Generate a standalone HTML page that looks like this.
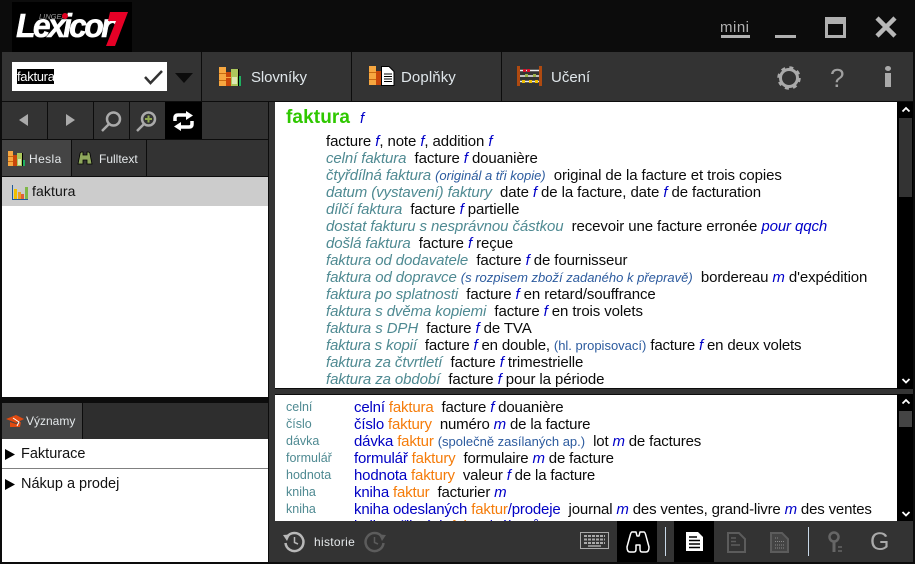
<!DOCTYPE html>
<html><head><meta charset="utf-8">
<style>
html,body{margin:0;padding:0}
body{width:915px;height:564px;position:relative;overflow:hidden;background:#0c0c0c;font-family:"Liberation Sans",sans-serif;font-size:14px;color:#000}
.a{position:absolute}
.l{position:absolute;white-space:nowrap;line-height:17px;height:17px}
.t{font-size:15px;letter-spacing:-.1px;color:#0a0a0a}
.u{letter-spacing:-.17px}
.p{font-style:italic;color:#4f8a92}
i{color:#0000c8}
.s{font-size:13px;letter-spacing:0;color:#2b5a9e}
.o{color:#f57c0a}
.b{color:#0000c4}
.w{color:#dfe6ea}
.n{font-size:12.500px;color:#4f8a92}
svg{position:absolute;overflow:visible}
</style></head><body>
<!-- Top bar -->
<div class="a" style="left:12px;top:2px;width:120px;height:50px;background:#000"></div>
<div class="a" style="left:16px;top:9px;font:italic bold 33px/34px 'Liberation Sans',sans-serif;color:#fff;letter-spacing:-2.800px;transform:scaleX(.97);transform-origin:left;-webkit-text-stroke:.5px #fff">Lexicon</div>
<div class="a" style="left:39px;top:12px;font:italic 7.500px/9px 'Liberation Sans',sans-serif;color:#999">LINGEA</div>
<div class="a" style="left:62px;top:13px;width:6px;height:6px;border-radius:50%;background:#e00020"></div>
<svg style="left:0;top:0" width="135" height="52"><path d="M110 12H128L115 46H106L116 21H108Z" fill="#e60026"/></svg>
<div class="a" style="left:720px;top:19px;font-size:15px;line-height:17px;color:#b0b0b0;letter-spacing:.5px">mini</div>
<div class="a" style="left:721px;top:35px;width:29px;height:3px;background:#b0b0b0"></div>
<div class="a" style="left:775px;top:35px;width:21px;height:3px;background:#b0b0b0"></div>
<div class="a" style="left:825px;top:17px;width:15px;height:11px;border:3px solid #b0b0b0;border-top-width:7px"></div>
<svg style="left:875px;top:16px" width="22" height="22"><path d="M2 2L20 20M20 2L2 20" stroke="#b8b8b8" stroke-width="4.500" fill="none"/></svg>

<!-- Toolbar -->
<div class="a" style="left:2px;top:52px;width:911px;height:49px;background:#333"></div>
<div class="a" style="left:201px;top:52px;width:1px;height:49px;background:#0c0c0c"></div>
<div class="a" style="left:351px;top:52px;width:1px;height:49px;background:#0c0c0c"></div>
<div class="a" style="left:501px;top:52px;width:1px;height:49px;background:#0c0c0c"></div>
<div class="a" style="left:12px;top:62px;width:155px;height:29px;background:#fff"></div>
<div class="a" style="left:17px;top:69px;height:15px;line-height:15px;background:#000;color:#fff;font-size:13px;letter-spacing:-.3px;width:37px;overflow:hidden">faktura</div>
<svg style="left:143px;top:69px" width="21" height="16"><path d="M2 8L7.500 14L19 2" stroke="#333" stroke-width="2.500" fill="none"/></svg>
<svg style="left:175px;top:73px" width="19" height="10"><path d="M0 0H18L9 10Z" fill="#0c0c0c"/></svg>

<!-- books icon slovniky -->
<svg style="left:219px;top:67px" width="23" height="20"><rect width="7" height="19" fill="#f7a740"/><rect y="6" width="7" height="1" fill="#c96a10"/><rect y="13" width="7" height="1" fill="#c96a10"/><rect x="7" y="5" width="5" height="14" fill="#c9470a"/><rect x="7" y="10" width="5" height="1" fill="#f7a740"/><rect x="12" y="2" width="7" height="17" fill="#acc85c"/><rect x="13" y="10" width="5" height="7" fill="#dce8b4"/><rect x="19" y="2" width="1" height="17" fill="#000"/><rect x="20" y="9" width="2" height="10" fill="#1fb060"/></svg>
<div class="l w" style="left:251px;top:69px;font-size:15px;letter-spacing:-.1px">Slovníky</div>
<svg style="left:369px;top:66px" width="26" height="21"><rect width="7" height="19" y="0" fill="#f7a740"/><rect y="6" width="7" height="1" fill="#c96a10"/><rect y="13" width="7" height="1" fill="#c96a10"/><rect x="7" y="5" width="6" height="14" fill="#c9470a"/><path d="M12.500 .5H20L25 5.500V19.500H12.500Z" fill="#fff" stroke="#000"/><path d="M15 8H23M15 10.500H23M15 13H23M15 15.500H23" stroke="#000" stroke-width="1"/></svg>
<div class="l w" style="left:401px;top:69px;font-size:15px;letter-spacing:.1px">Doplňky</div>
<svg style="left:517px;top:66px" width="26" height="20"><rect width="3" height="20" fill="#b04a10"/><rect x="22" width="3" height="20" fill="#b04a10"/><path d="M3 4.500H22M3 10H22M3 15.500H22" stroke="#eee" stroke-width="1.500"/><rect x="6" y="3" width="3" height="3" fill="#d8102a"/><rect x="10" y="3" width="3" height="3" fill="#d8102a"/><rect x="8" y="8" width="3" height="3" fill="#9ab048"/><rect x="16" y="8" width="3" height="3" fill="#9ab048"/><rect x="5" y="14" width="3" height="3" fill="#f0c000"/><rect x="12" y="14" width="3" height="3" fill="#f0c000"/><rect x="18" y="14" width="3" height="3" fill="#f0c000"/></svg>
<div class="l w" style="left:551px;top:69px;font-size:15px">Učení</div>
<svg style="left:776px;top:65px" width="26" height="26"><circle cx="13" cy="13" r="8.500" fill="none" stroke="#aaa" stroke-width="3"/><circle cx="13" cy="13" r="10.500" fill="none" stroke="#aaa" stroke-width="2.500" stroke-dasharray="4 4.250"/></svg>
<div class="a" style="left:830px;top:63px;font-size:26px;line-height:30px;color:#a0a0a0">?</div>
<div class="a" style="left:885px;top:66px;width:6px;height:5px;border-radius:50%;background:#aaa"></div>
<div class="a" style="left:885px;top:73px;width:6px;height:14px;background:#aaa"></div>

<!-- Left column -->
<div class="a" style="left:0;top:101px;width:2px;height:463px;background:#0c0c0c"></div>
<div class="a" style="left:2px;top:102px;width:266px;height:37px;background:#333"></div>
<div class="a" style="left:47px;top:102px;width:1px;height:37px;background:#0c0c0c"></div>
<div class="a" style="left:93px;top:102px;width:1px;height:37px;background:#0c0c0c"></div>
<div class="a" style="left:129px;top:102px;width:1px;height:37px;background:#0c0c0c"></div>
<div class="a" style="left:165px;top:102px;width:37px;height:37px;background:#000"></div>
<svg style="left:19px;top:114px" width="10" height="13"><path d="M9 0V12L0 6Z" fill="#aaa"/></svg>
<svg style="left:66px;top:114px" width="10" height="13"><path d="M0 0V12L9 6Z" fill="#aaa"/></svg>
<svg style="left:101px;top:110px" width="22" height="22"><circle cx="12.500" cy="9" r="6.500" fill="none" stroke="#aaa" stroke-width="2.500"/><path d="M8 14L1 21" stroke="#aaa" stroke-width="2.500"/></svg>
<svg style="left:136px;top:110px" width="22" height="22"><circle cx="12.500" cy="9" r="6.500" fill="none" stroke="#aaa" stroke-width="2.500"/><path d="M8 14L1 21" stroke="#aaa" stroke-width="2.500"/><path d="M9 9H16M12.500 5.500V12.500" stroke="#8fa850" stroke-width="2"/></svg>
<svg style="left:173px;top:111px" width="21" height="20"><path d="M2 10V7Q2 4 5 4H15M19 10V13Q19 16 16 16H6" stroke="#fff" stroke-width="3.500" fill="none"/><path d="M13 0L20 4.500L13 9ZM8 11L1 15.500L8 20Z" fill="#fff"/></svg>

<div class="a" style="left:2px;top:140px;width:266px;height:36px;background:#333"></div>
<div class="a" style="left:2px;top:140px;width:69px;height:36px;background:#444"></div>
<div class="a" style="left:71px;top:140px;width:1px;height:36px;background:#0c0c0c"></div>
<div class="a" style="left:146px;top:140px;width:1px;height:36px;background:#0c0c0c"></div>
<svg style="left:8px;top:151px" width="18" height="16"><rect width="5" height="15" fill="#f7a740"/><rect y="5" width="5" height="1" fill="#c96a10"/><rect y="10" width="5" height="1" fill="#c96a10"/><rect x="5" y="4" width="4" height="11" fill="#c9470a"/><rect x="9" y="2" width="5" height="13" fill="#acc85c"/><rect x="10" y="8" width="3" height="6" fill="#dce8b4"/><rect x="14" y="2" width="1" height="13" fill="#000"/><rect x="15" y="9" width="2" height="6" fill="#1fb060"/></svg>
<div class="l" style="left:29px;top:151px;font-size:12px;letter-spacing:.4px;color:#e4e8ea">Hesla</div>
<svg style="left:78px;top:151px" width="15" height="15"><path d="M2 3Q2 1 4 1H5V4H9V1H10Q12 1 12 3L14 13H9V9H5V13H0Z" fill="#8fa85c" stroke="#000" stroke-width=".8"/></svg>
<div class="l" style="left:99px;top:151px;font-size:12px;color:#e4e8ea">Fulltext</div>

<div class="a" style="left:2px;top:177px;width:266px;height:220px;background:#fff"></div>
<div class="a" style="left:2px;top:177px;width:266px;height:29px;background:#ccc"></div>
<svg style="left:12px;top:184px" width="17" height="17"><rect x="2" y="5" width="3" height="10" fill="#f0c000"/><rect x="6" y="8" width="3" height="7" fill="#f0a020"/><rect x="9" y="10" width="3" height="5" fill="#e0603a"/><rect x="13" y="3" width="3" height="12" fill="#7fb848"/><path d="M.5 1V15.500H16" fill="none" stroke="#1f5a9a"/></svg>
<div class="l" style="left:32px;top:183px;font-size:14px;letter-spacing:.1px;color:#111">faktura</div>

<div class="a" style="left:2px;top:403px;width:266px;height:36px;background:#2e2e2e"></div>
<div class="a" style="left:2px;top:403px;width:80px;height:36px;background:#444"></div>
<div class="a" style="left:82px;top:403px;width:1px;height:36px;background:#0c0c0c"></div>
<svg style="left:6px;top:415px" width="19" height="14"><path d="M0 4L10 0L18 4L10 8Z" fill="#e04a10"/><path d="M4 7V12H14L15 7L10 9Z" fill="#e04a10"/><path d="M7 3L13 7L11 11" stroke="#fff" stroke-width="1" fill="none"/></svg>
<div class="l" style="left:26px;top:413px;font-size:12px;color:#e4e8ea">Významy</div>
<div class="a" style="left:2px;top:439px;width:266px;height:123px;background:#fff"></div>
<div class="a" style="left:2px;top:468px;width:266px;height:1px;background:#808080"></div>
<svg style="left:5px;top:449px" width="10" height="12"><path d="M0 0V11L10 5.500Z" fill="#000"/></svg>
<div class="l" style="left:21px;top:446px;font-size:14.500px;color:#111">Fakturace</div>
<svg style="left:5px;top:479px" width="10" height="12"><path d="M0 0V11L10 5.500Z" fill="#000"/></svg>
<div class="l" style="left:21px;top:476px;font-size:14.500px;color:#111">Nákup a prodej</div>

<!-- Right column bg -->
<div class="a" style="left:269px;top:102px;width:6px;height:420px;background:#333"></div>
<div class="a" style="left:275px;top:102px;width:622px;height:286px;background:#fff;overflow:hidden"></div>
<div class="a" style="left:275px;top:395px;width:622px;height:126px;background:#fff"></div>
<div class="a" style="left:275px;top:389px;width:638px;height:5px;background:#333"></div>

<!-- Scrollbars -->
<div class="a" style="left:897px;top:102px;width:16px;height:287px;background:#000"></div>
<div class="a" style="left:899px;top:118px;width:13px;height:79px;background:#333"></div>
<svg style="left:902px;top:107px" width="8" height="6"><path d="M.5 4.500L4 1L7.500 4.500" stroke="#fff" stroke-width="1.800" fill="none"/></svg>
<svg style="left:902px;top:378px" width="8" height="6"><path d="M.5 1L4 4.500L7.500 1" stroke="#fff" stroke-width="1.800" fill="none"/></svg>
<div class="a" style="left:897px;top:394px;width:16px;height:127px;background:#000"></div>
<div class="a" style="left:899px;top:411px;width:13px;height:16px;background:#444"></div>
<svg style="left:902px;top:399px" width="8" height="6"><path d="M.5 4.500L4 1L7.500 4.500" stroke="#fff" stroke-width="1.800" fill="none"/></svg>
<svg style="left:902px;top:511px" width="8" height="6"><path d="M.5 1L4 4.500L7.500 1" stroke="#fff" stroke-width="1.800" fill="none"/></svg>

<!-- Main entry -->
<div class="l" style="left:286px;top:107px;height:22px;line-height:22px;font-size:19px;letter-spacing:.1px;font-weight:bold;color:#2fc800">faktura</div>
<div class="l t" style="left:360px;top:110px"><i>f</i></div>
<div class="l t" style="left:326px;top:133px">facture <i>f</i>, note <i>f</i>, addition <i>f</i></div>
<div class="l t" style="left:326px;top:150px"><span class="p">celní faktura</span>&nbsp; facture <i>f</i> douanière</div>
<div class="l t" style="left:326px;top:167px"><span class="p">čtyřdílná faktura <span class="s">(originál a tři kopie)</span></span>&nbsp; original de la facture et trois copies</div>
<div class="l t" style="left:326px;top:184px"><span class="p">datum (vystavení) faktury</span>&nbsp; date <i>f</i> de la facture, date <i>f</i> de facturation</div>
<div class="l t" style="left:326px;top:201px"><span class="p">dílčí faktura</span>&nbsp; facture <i>f</i> partielle</div>
<div class="l t" style="left:326px;top:218px"><span class="p">dostat fakturu s nesprávnou částkou</span>&nbsp; recevoir une facture erronée <i>pour qqch</i></div>
<div class="l t" style="left:326px;top:235px"><span class="p">došlá faktura</span>&nbsp; facture <i>f</i> reçue</div>
<div class="l t" style="left:326px;top:252px"><span class="p">faktura od dodavatele</span>&nbsp; facture <i>f</i> de fournisseur</div>
<div class="l t" style="left:326px;top:269px"><span class="p">faktura od dopravce <span class="s">(s rozpisem zboží zadaného k přepravě)</span></span>&nbsp; bordereau <i>m</i> d'expédition</div>
<div class="l t" style="left:326px;top:286px"><span class="p">faktura po splatnosti</span>&nbsp; facture <i>f</i> en retard/souffrance</div>
<div class="l t" style="left:326px;top:303px"><span class="p">faktura s dvěma kopiemi</span>&nbsp; facture <i>f</i> en trois volets</div>
<div class="l t" style="left:326px;top:320px"><span class="p">faktura s DPH</span>&nbsp; facture <i>f</i> de TVA</div>
<div class="l t u" style="left:326px;top:337px"><span class="p">faktura s kopií</span>&nbsp; facture <i>f</i> en double, <span class="s">(hl. propisovací)</span> facture <i>f</i> en deux volets</div>
<div class="l t" style="left:326px;top:354px"><span class="p">faktura za čtvrtletí</span>&nbsp; facture <i>f</i> trimestrielle</div>
<div class="l t" style="left:326px;top:371px"><span class="p">faktura za období</span>&nbsp; facture <i>f</i> pour la période</div>

<!-- Lower list -->
<div class="l n" style="left:286px;top:399px">celní</div>
<div class="l t u" style="left:354px;top:399px"><span class="b">celní</span> <span class="o">faktura</span>&nbsp; facture <i>f</i> douanière</div>
<div class="l n" style="left:286px;top:416px">číslo</div>
<div class="l t u" style="left:354px;top:416px"><span class="b">číslo</span> <span class="o">faktury</span>&nbsp; numéro <i>m</i> de la facture</div>
<div class="l n" style="left:286px;top:433px">dávka</div>
<div class="l t u" style="left:354px;top:433px"><span class="b">dávka</span> <span class="o">faktur</span> <span class="s">(společně zasílaných ap.)</span>&nbsp; lot <i>m</i> de factures</div>
<div class="l n" style="left:286px;top:450px">formulář</div>
<div class="l t u" style="left:354px;top:450px"><span class="b">formulář</span> <span class="o">faktury</span>&nbsp; formulaire <i>m</i> de facture</div>
<div class="l n" style="left:286px;top:467px">hodnota</div>
<div class="l t u" style="left:354px;top:467px"><span class="b">hodnota</span> <span class="o">faktury</span>&nbsp; valeur <i>f</i> de la facture</div>
<div class="l n" style="left:286px;top:484px">kniha</div>
<div class="l t u" style="left:354px;top:484px"><span class="b">kniha</span> <span class="o">faktur</span>&nbsp; facturier <i>m</i></div>
<div class="l n" style="left:286px;top:501px">kniha</div>
<div class="l t u" style="left:354px;top:501px"><span class="b">kniha odeslaných</span> <span class="o">faktur</span><span class="b">/prodeje</span>&nbsp; journal <i>m</i> des ventes, grand-livre <i>m</i> des ventes</div>
<div class="l t u" style="left:354px;top:518px"><span class="b">kniha přijatých</span> <span class="o">faktur</span><span class="b">/nákupů</span></div>

<!-- Bottom bar -->
<div class="a" style="left:269px;top:521px;width:644px;height:41px;background:#333"></div>
<svg style="left:283px;top:531px" width="22" height="22"><path d="M4 6A9 9 0 1 1 2.500 12" fill="none" stroke="#b8b8b8" stroke-width="2.500"/><path d="M0 4L7 3.500L4 10Z" fill="#b8b8b8"/><path d="M11.500 6V11.500L15 13" stroke="#b8b8b8" stroke-width="1.500" fill="none"/></svg>
<div class="l" style="left:314px;top:534px;font-size:12px;letter-spacing:.3px;color:#e4e8ea">historie</div>
<svg style="left:364px;top:531px" width="22" height="22"><path d="M18 6A9 9 0 1 0 19.500 12" fill="none" stroke="#5c5c5c" stroke-width="2.500"/><path d="M22 4L15 3.500L18 10Z" fill="#5c5c5c"/><path d="M10.500 6V11.500L14 13" stroke="#5c5c5c" stroke-width="1.500" fill="none"/></svg>
<svg style="left:580px;top:532px" width="29" height="18"><rect x=".5" y=".5" width="28" height="16" fill="none" stroke="#aaa"/><path d="M4 4H25M4 7.500H25M4 11H25" stroke="#aaa" stroke-width="2" stroke-dasharray="3 1"/><path d="M8 14H21" stroke="#aaa" stroke-width="1.500"/></svg>
<div class="a" style="left:617px;top:521px;width:40px;height:41px;background:#000"></div>
<svg style="left:626px;top:531px" width="24" height="22"><path d="M6 1H10L11 5H13L14 1H18Q19 1 20 5L23 16Q23 21 20 21H16Q14 21 14 18V14H10V18Q10 21 8 21H4Q1 21 1 16L4 5Q5 1 6 1Z" fill="#000" stroke="#fff" stroke-width="1.500" stroke-linejoin="round"/></svg>
<div class="a" style="left:665px;top:527px;width:1px;height:29px;background:#c8d8e8"></div>
<div class="a" style="left:674px;top:521px;width:40px;height:41px;background:#000"></div>
<svg style="left:685px;top:531px" width="19" height="22"><path d="M1 1H13L18 6V20H1Z" fill="#fff"/><path d="M4 6H12M4 9.500H15M4 13H15M4 16.500H15" stroke="#000" stroke-width="1.500"/></svg>
<svg style="left:727px;top:532px" width="19" height="21"><path d="M1 1H12L18 7V20H1Z" fill="none" stroke="#5c5c5c" stroke-width="2"/><path d="M4 6H9M4 9.500H9M4 13H13" stroke="#5c5c5c" stroke-width="1.500"/></svg>
<svg style="left:770px;top:532px" width="19" height="21"><path d="M1 1H12L18 7V20H1Z" fill="#444" stroke="#5c5c5c" stroke-width="2"/><path d="M5 6H9M5 9.500H14M5 13H14M5 16H14" stroke="#888" stroke-width="1" stroke-dasharray="1 1"/></svg>
<div class="a" style="left:808px;top:527px;width:1px;height:29px;background:#c8d8e8"></div>
<svg style="left:828px;top:531px" width="15" height="22"><circle cx="6" cy="6" r="4.500" fill="none" stroke="#666" stroke-width="2.500"/><path d="M6 10V21" stroke="#666" stroke-width="3"/><path d="M10 16H14M10 20H14" stroke="#666" stroke-width="1.500"/></svg>
<div class="a" style="left:870px;top:528px;font-size:25px;line-height:29px;color:#aaa;font-weight:normal">G</div>
</body></html>
